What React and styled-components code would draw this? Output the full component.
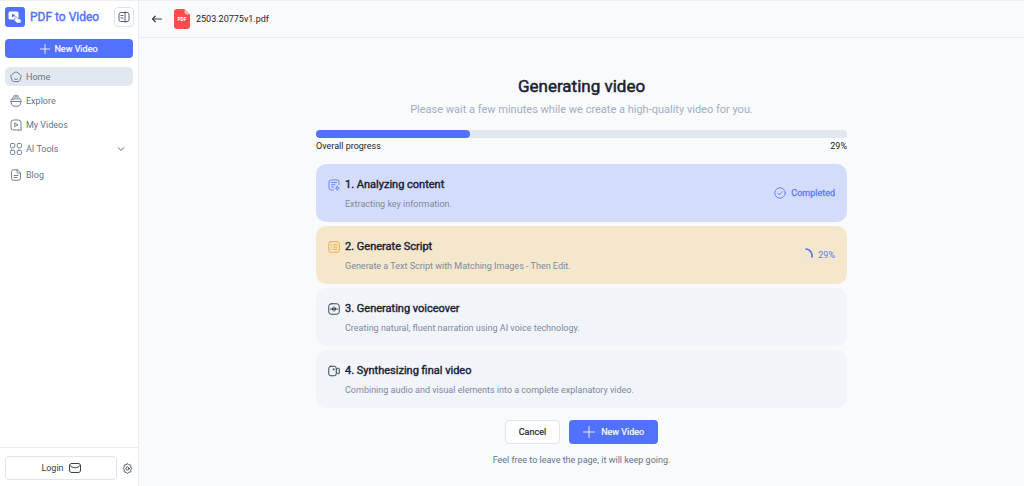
import React from "react";
import styled, { createGlobalStyle } from "styled-components";

const steps = [
    {
        id: 1,
        title: "1. Analyzing content",
        text: "Extracting key information.",
        icon: "analyze",
        background: "#d4dcfc",
        color: "#6f88ff",
        status: "completed",
    },
    {
        id: 2,
        title: "2. Generate Script",
        text: "Generate a Text Script with Matching Images - Then Edit.",
        icon: "script",
        background: "#f5e7cc",
        color: "#f5ab3c",
        status: "running",
    },
    {
        id: 3,
        title: "3. Generating voiceover",
        text: "Creating natural, fluent narration using AI voice technology.",
        icon: "voice",
        background: "#f1f4f9",
        color: "#3c4452",
    },
    {
        id: 4,
        title: "4. Synthesizing final video",
        text: "Combining audio and visual elements into a complete explanatory video.",
        icon: "camera",
        background: "#f1f4f9",
        color: "#3c4452",
    },
];

const links = [
    { label: "Home", icon: "home", active: true },
    { label: "Explore", icon: "explore" },
    { label: "My Videos", icon: "videos" },
    { label: "AI Tools", icon: "tools", expandable: true },
    { label: "Blog", icon: "blog" },
];

const progress = 29;

const shapes = {
    home: <>
        <path d="M10 2.500a3.500 3.500 0 0 1 4 0l7 5.200a3 3 0 0 1 1.200 3.400l-2.700 8a3 3 0 0 1-2.800 2.100H7.300a3 3 0 0 1-2.800-2.100l-2.700-8A3 3 0 0 1 3 7.700z"/>
        <path d="M9 16c1.700 1.200 4.300 1.200 6 0"/>
    </>,
    explore: <>
        <path d="M8 1.500h8M5.500 6c.2-1.300 1-2 2.500-2h8c1.500 0 2.300.7 2.500 2"/>
        <path d="M2 13h20M5 8h14a3 3 0 0 1 3 3c0 7.500-2.500 11.500-7 11.500H9c-4.500 0-7-4-7-11.500a3 3 0 0 1 3-3z"/>
    </>,
    videos: <>
        <path d="M17.500 22H7a5 5 0 0 1-5-5V7a5 5 0 0 1 5-5h10a5 5 0 0 1 5 5v14"/>
        <path d="M9.500 8.500v7l6-3.500zM17.500 22h5"/>
    </>,
    tools: <>
        <rect x="1" y="1" width="8.500" height="8.500" rx="2"/>
        <rect x="14.500" y="1" width="8.500" height="8.500" rx="2"/>
        <rect x="1" y="14.500" width="8.500" height="8.500" rx="2"/>
        <rect x="14.500" y="14.500" width="8.500" height="8.500" rx="2"/>
    </>,
    blog: <>
        <path d="M14 1.500H7a4 4 0 0 0-4 4v13a4 4 0 0 0 4 4h10a4 4 0 0 0 4-4V9z"/>
        <path d="M14 1.500v4a3 3 0 0 0 3 3h4M8 13h8M8 17h6"/>
    </>,
    panel: <>
        <path d="M13 3H6a4 4 0 0 0-4 4v10a4 4 0 0 0 4 4h7M14 1.500v21M14 3h4a4 4 0 0 1 4 4v10a4 4 0 0 1-4 4h-4"/>
        <path d="M6 9h4M6 14h4"/>
    </>,
    plus: <path d="M12 1v22M1 12h22"/>,
    arrow: <path d="M21 12H3M8.500 6.500L3 12l5.500 5.500"/>,
    chevron: <path d="M3 8l9 8 9-8"/>,
    mail: <>
        <path d="M6 3h12c3.500 0 5 1.500 5 5v8c0 3.500-1.500 5-5 5H6c-3.500 0-5-1.500-5-5V8c0-3.500 1.500-5 5-5z"/>
        <path d="M1.500 6.500c5 7 16 7 21 0"/>
    </>,
    settings: <>
        <path d="M10 2.800c1.100-1.700 2.900-1.700 4 0 .7 1.100 1.500 1.500 2.800 1.300 2-.3 3.100 1.300 2.300 3.200-.5 1.200-.3 2 .8 2.800 1.600 1.200 1.600 2.600 0 3.800-1.100.8-1.300 1.600-.8 2.800.8 1.900-.3 3.500-2.300 3.200-1.300-.2-2.100.2-2.800 1.300-1.100 1.700-2.900 1.700-4 0-.7-1.100-1.500-1.500-2.800-1.300-2 .3-3.100-1.300-2.300-3.200.5-1.200.3-2-.8-2.800-1.600-1.200-1.600-2.600 0-3.800 1.100-.8 1.300-1.600.8-2.800-.8-1.900.3-3.500 2.300-3.200 1.300.2 2.100-.2 2.800-1.300z"/>
        <circle cx="12" cy="12" r="3.500"/>
    </>,
    analyze: <>
        <path d="M11 22H6a4 4 0 0 1-4-4V6a4 4 0 0 1 4-4h12a4 4 0 0 1 4 4v5M7 7h10M7 11.500h7M7 16h4"/>
        <path d="M18.500 14.500l1.200 2.800 2.800 1.200-2.800 1.200-1.200 2.800-1.200-2.800-2.800-1.200 2.800-1.200z"/>
    </>,
    script: <>
        <rect x="1.500" y="1.500" width="21" height="21" rx="4"/>
        <path d="M6 7.500h1.500M11 7.500h7M6 12h1.500M11 12h7M6 16.500h1.500M11 16.500h7"/>
    </>,
    voice: <>
        <rect x="1.500" y="1.500" width="21" height="21" rx="5"/>
        <path d="M5 12h14M9 10v4M12 7.500v9M15 10v4"/>
    </>,
    camera: <>
        <rect x="1.500" y="2.500" width="15" height="19" rx="4"/>
        <path d="M16.500 9l3.500-2.200c1.500-.9 2.500-.3 2.500 1.200v8c0 1.500-1 2.100-2.500 1.200L16.500 15"/>
        <circle cx="11" cy="8.500" r="1"/>
    </>,
    check: <>
        <circle cx="12" cy="12" r="10.500"/>
        <path d="M7.500 12.500l3 3 6-6.500"/>
    </>,
};

const Icon = ({name, size = 12, weight = 2}) => (
    <Svg width={size} height={size} viewBox="0 0 24 24" strokeWidth={weight} aria-hidden="true">
        {shapes[name]}
    </Svg>
);

const Logo = () => (
    <svg width="20" height="20" viewBox="0 0 20 20" aria-hidden="true">
        <rect width="20" height="20" rx="3" fill="#5271ff"/>
        <rect x="3.500" y="4.500" width="10" height="8" rx="1.500" fill="#fff"/>
        <path d="M7 6.500v4l3.400-2z" fill="#5271ff"/>
        <path
            d="M9.800 10.300c0-1 1.600-1.300 2-.2l.4 1.400 2.500.5c1.200.3 1.700 1.100 1.400 2.200l-.5 1.800h-3.600l-2.700-2.600c-.7-.9.3-1.700 1.100-1.200z"
            fill="#fff" stroke="#5271ff" strokeWidth="0.600"
        />
    </svg>
);

const PdfBadge = () => (
    <svg width="16" height="20" viewBox="0 0 16 20" aria-hidden="true">
        <path d="M3 0h7.500L16 5.500V17a3 3 0 0 1-3 3H3a3 3 0 0 1-3-3V3a3 3 0 0 1 3-3z" fill="#ff4b4b"/>
        <path d="M10.500 0L16 5.500h-3.500a2 2 0 0 1-2-2z" fill="#ffb6b6"/>
        <text x="8" y="12" textAnchor="middle" fontSize="5" fontWeight="700" fill="#fff">PDF</text>
    </svg>
);

const Spinner = () => (
    <svg width="15" height="15" viewBox="0 0 15 15" fill="none" aria-hidden="true">
        <circle cx="7.500" cy="7.500" r="6.500" stroke="#e6e6ee"/>
        <path d="M7.500 1a6.500 6.500 0 0 1 6.200 8.500" stroke="#5271ff" strokeWidth="1.700"/>
    </svg>
);

const Step = ({step}) => {
    return <StepCard $background={step.background}>
        <StepIcon $color={step.color}>
            <Icon name={step.icon}/>
        </StepIcon>
        <StepBody>
            <StepTitle>{step.title}</StepTitle>
            <StepText>{step.text}</StepText>
        </StepBody>
        {step.status === "completed" && <Status $strong><Icon name="check" weight={1.7}/>Completed</Status>}
        {step.status === "running" && <Status><Spinner/>{progress}%</Status>}
    </StepCard>
}

const App = () => {
    return <>
        <GlobalStyle/>
        <Page>
            <Sidebar>
                <Brand>
                    <Logo/>
                    <BrandName href="#">PDF to Video</BrandName>
                    <PanelButton type="button" aria-label="Collapse sidebar">
                        <Icon name="panel"/>
                    </PanelButton>
                </Brand>
                <CreateButton type="button">
                    <Icon name="plus" size={10}/>
                    New Video
                </CreateButton>
                <Nav>
                    {links.map(link => (
                        <NavLink key={link.label} href="#" $active={link.active}>
                            <Icon name={link.icon} weight={1.8}/>
                            {link.label}
                            {link.expandable && <NavArrow><Icon name="chevron" size={8} weight={3}/></NavArrow>}
                        </NavLink>
                    ))}
                </Nav>
                <SidebarFooter>
                    <LoginButton type="button">Login <Icon name="mail"/></LoginButton>
                    <IconButton type="button" aria-label="Settings"><Icon name="settings" size={11}/></IconButton>
                </SidebarFooter>
            </Sidebar>
            <Main>
                <Header>
                    <IconButton type="button" aria-label="Back"><Icon name="arrow" weight={2.4}/></IconButton>
                    <PdfBadge/>
                    <FileName>2503.20775v1.pdf</FileName>
                </Header>
                <Content>
                    <Title>Generating video</Title>
                    <Subtitle>Please wait a few minutes while we create a high-quality video for you.</Subtitle>
                    <Track role="progressbar" aria-labelledby="overall" aria-valuenow={progress}>
                        <Bar style={{ width: `${progress}%` }}/>
                    </Track>
                    <ProgressInfo>
                        <span id="overall">Overall progress</span>
                        <span>{progress}%</span>
                    </ProgressInfo>
                    <StepList>
                        {steps.map(step => <Step key={step.id} step={step}/>)}
                    </StepList>
                    <Actions>
                        <CancelButton type="button">Cancel</CancelButton>
                        <NewVideoButton type="button">
                            <Icon name="plus" weight={1.7}/>
                            New Video
                        </NewVideoButton>
                    </Actions>
                    <Note>Feel free to leave the page, it will keep going.</Note>
                </Content>
            </Main>
        </Page>
    </>
}

const GlobalStyle = createGlobalStyle`
  * {
    box-sizing: border-box;
  }

  body {
    margin: 0;
    background: #f9fafc;
    color: #1e2430;
    font-family: Roboto, "Liberation Sans", sans-serif;
    font-size: 9px;
    line-height: 12px;
  }

  button {
    padding: 0;
    border: 0;
    background: none;
    color: inherit;
    font: inherit;
    cursor: pointer;
  }

  a {
    color: inherit;
    text-decoration: none;
  }

  svg {
    flex-shrink: 0;
  }
`;

const Svg = styled.svg`
  display: block;
  fill: none;
  stroke: currentColor;
  stroke-linecap: round;
  stroke-linejoin: round;
`;

const Page = styled.div`
  display: flex;
  min-height: 100vh;
  border-top: 1px solid #eeeff1;
`;

const Sidebar = styled.aside`
  display: flex;
  flex-direction: column;
  flex-shrink: 0;
  width: 139px;
  border-right: 1px solid #e8edf3;
  background: #fff;
`;

const Brand = styled.div`
  display: flex;
  align-items: center;
  padding: 6px 4px 0 5px;
`;

const BrandName = styled.a`
  margin-left: 5px;
  color: #5271ff;
  font-size: 12px;
  line-height: 20px;
  white-space: nowrap;
  -webkit-text-stroke: 0.4px currentColor;
`;

const PanelButton = styled.button`
  display: flex;
  align-items: center;
  justify-content: center;
  width: 20px;
  height: 20px;
  margin-left: auto;
  border: 1px solid #dfe5ed;
  border-radius: 4px;
  color: #526076;
`;

const CreateButton = styled.button`
  display: flex;
  align-items: center;
  justify-content: center;
  gap: 4px;
  height: 19px;
  margin: 12px 5px 9px;
  border-radius: 4px;
  background: #5271ff;
  color: #fff;
  -webkit-text-stroke: 0.2px currentColor;
`;

const Nav = styled.nav`
  display: flex;
  flex-direction: column;
  gap: 5px;
  padding: 0 5px;
`;

const NavLink = styled.a`
  display: flex;
  align-items: center;
  gap: 4px;
  height: 19px;
  padding: 0 8px 0 5px;
  border-radius: 5px;
  background: ${({$active}) => $active ? "#e1e8f0" : "transparent"};
  color: #64748b;

  &:last-child {
    margin-top: 2px;
  }
`;

const NavArrow = styled.span`
  margin-left: auto;
`;

const SidebarFooter = styled.div`
  display: flex;
  align-items: center;
  gap: 5px;
  margin-top: auto;
  padding: 8px 5px 6px;
  border-top: 1px solid #e8edf3;
`;

const LoginButton = styled.button`
  display: flex;
  flex: 1;
  align-items: center;
  justify-content: center;
  gap: 5px;
  height: 24px;
  border: 1px solid #dfe5ed;
  border-radius: 4px;
  color: #334155;
`;

const IconButton = styled.button`
  display: flex;
  align-items: center;
  color: #334155;
`;

const Main = styled.main`
  flex: 1;
  min-width: 0;
`;

const Header = styled.header`
  display: flex;
  align-items: center;
  height: 37px;
  padding: 0 12px;
  border-bottom: 1px solid #e8edf3;

  ${IconButton} {
    margin-right: 11px;
  }
`;

const FileName = styled.span`
  margin-left: 6px;
`;

const Content = styled.section`
  display: flex;
  flex-direction: column;
  width: 60%;
  margin: 0 auto;
  padding-top: 36px;
`;

const Title = styled.h1`
  margin: 0;
  color: #1a2033;
  font-size: 17px;
  font-weight: 400;
  line-height: 24px;
  text-align: center;
  -webkit-text-stroke: 0.5px currentColor;
`;

const Subtitle = styled.p`
  margin: 4px 0 12px;
  color: #a0aec3;
  font-size: 11px;
  line-height: 16px;
  text-align: center;
`;

const Track = styled.div`
  height: 8px;
  border-radius: 4px;
  background: #e1e8f0;
`;

const Bar = styled.div`
  height: 100%;
  border-radius: 4px;
  background: #5271ff;
`;

const ProgressInfo = styled.div`
  display: flex;
  justify-content: space-between;
  margin: 2px 0 12px;
`;

const StepList = styled.div`
  display: flex;
  flex-direction: column;
  gap: 4px;
`;

const StepCard = styled.article`
  display: flex;
  align-items: center;
  padding: 12px;
  border-radius: 10px;
  background: ${({$background}) => $background};
`;

const StepIcon = styled.span`
  align-self: flex-start;
  margin: 3px 5px 0 0;
  color: ${({$color}) => $color};
`;

const StepBody = styled.div`
  flex: 1;
`;

const StepTitle = styled.h2`
  margin: 0 0 4px;
  color: #1a2033;
  font-size: 11px;
  font-weight: 400;
  line-height: 18px;
  -webkit-text-stroke: 0.4px currentColor;
`;

const StepText = styled.p`
  margin: 0;
  color: #7c8a9e;
`;

const Status = styled.div`
  display: flex;
  align-items: center;
  gap: 5px;
  color: #5f7bff;
  -webkit-text-stroke: ${({$strong}) => $strong ? "0.3px currentColor" : "0"};
`;

const Actions = styled.div`
  display: flex;
  justify-content: center;
  gap: 9px;
  margin-top: 12px;
`;

const CancelButton = styled.button`
  height: 24px;
  padding: 0 13px;
  border: 1px solid #dfe5ed;
  border-radius: 4px;
  background: #fff;
  -webkit-text-stroke: 0.2px currentColor;
`;

const NewVideoButton = styled.button`
  display: flex;
  align-items: center;
  gap: 6px;
  height: 24px;
  padding: 0 14px;
  border-radius: 4px;
  background: #5271ff;
  color: #fff;
  -webkit-text-stroke: 0.2px currentColor;
`;

const Note = styled.p`
  margin: 10px 0 0;
  color: #64748b;
  text-align: center;
`;

export default App
